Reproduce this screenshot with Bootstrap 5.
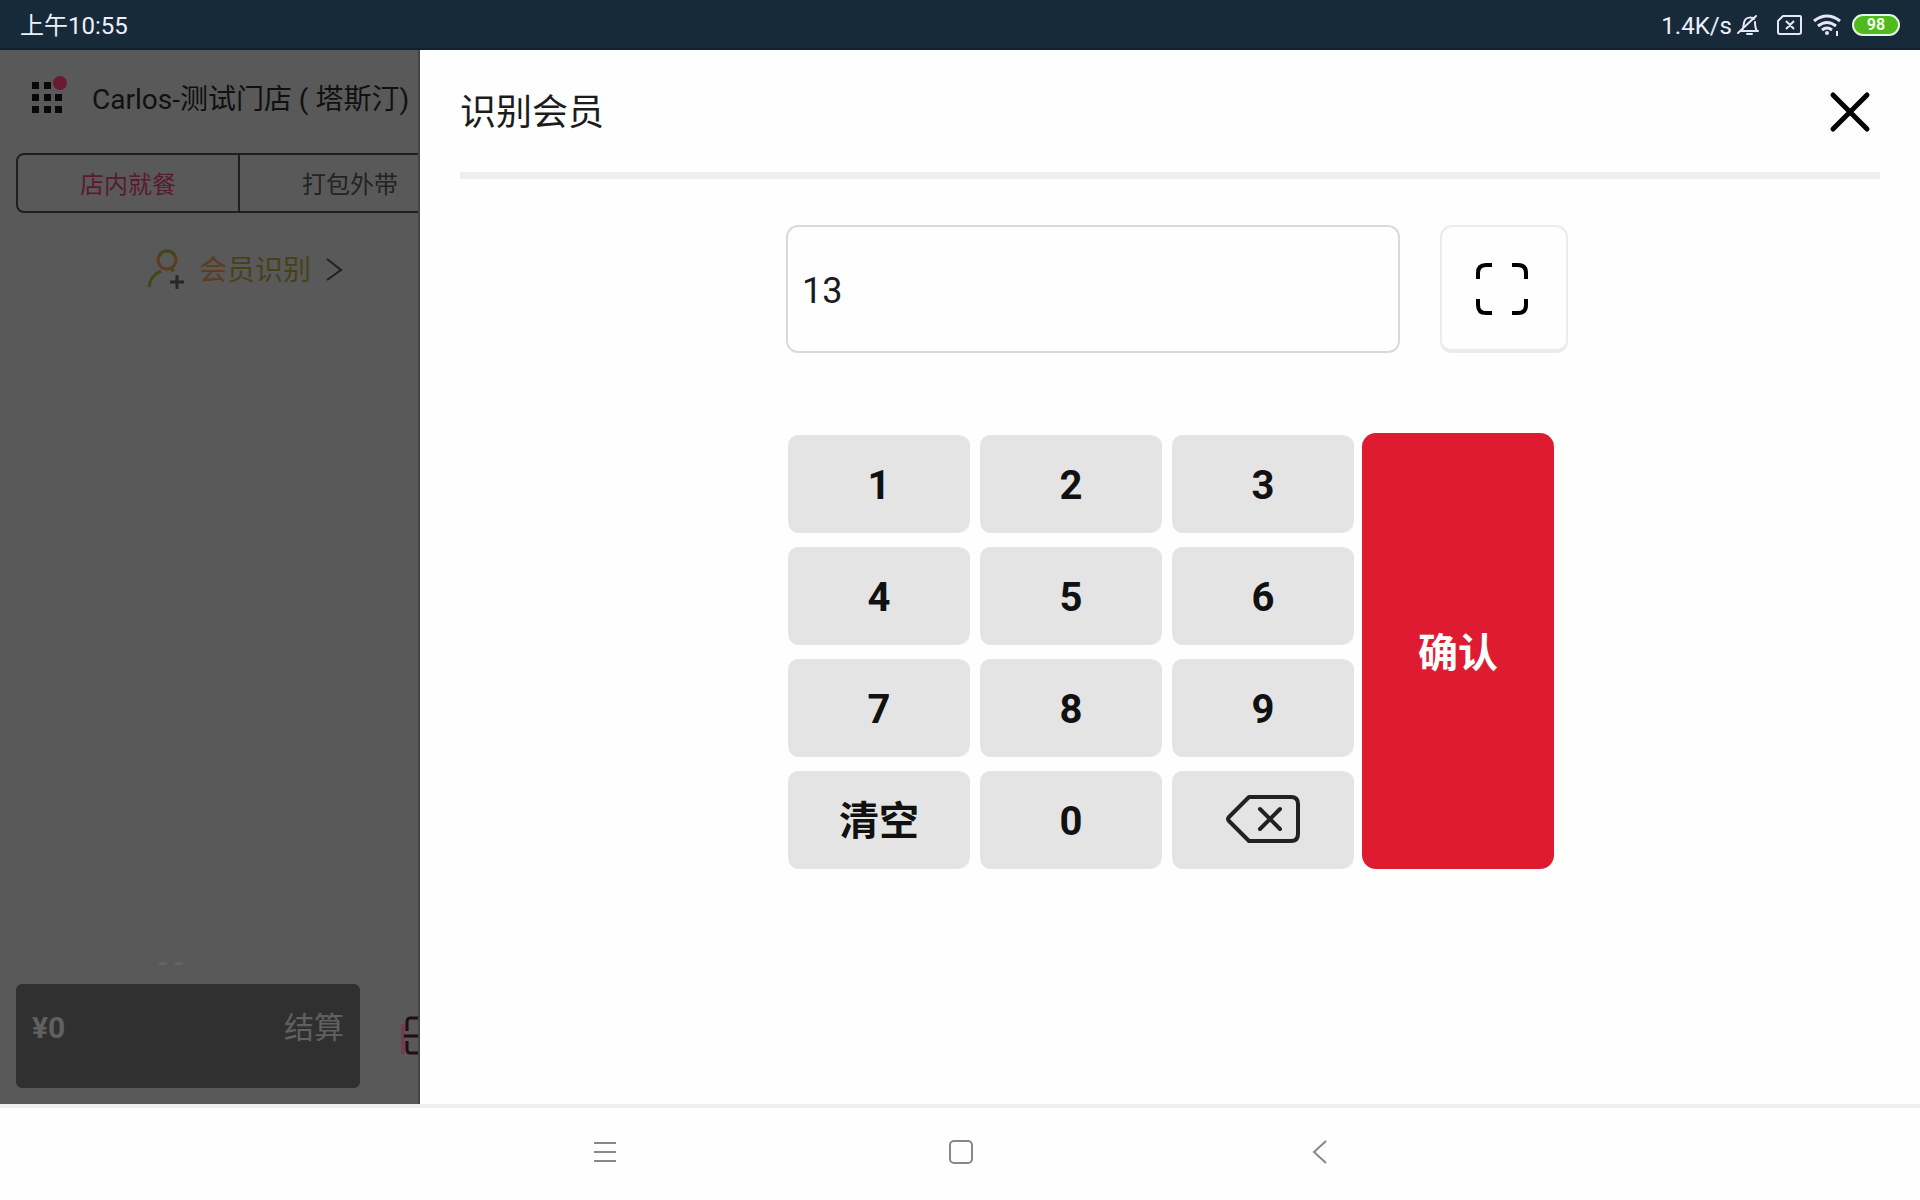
<!DOCTYPE html>
<html lang="zh-CN">
<head>
<meta charset="utf-8">
<meta name="viewport" content="width=device-width, initial-scale=1">
<title>识别会员</title>
<link href="https://cdn.jsdelivr.net/npm/bootstrap@5.3.0/dist/css/bootstrap.min.css" rel="stylesheet">
<style>
  body { font-family: Roboto, "Noto Sans CJK SC", sans-serif; background: #fefefe; color: #1c1c1c; }
  svg { display: block; flex: none; }
  .status-bar { height: 50px; padding: 2px 20px 0; background: #172a3a; color: #eef0fa; font-size: 24px; line-height: 24px; border-bottom: 2px solid #15202a; }
  .status-label { padding-top: 2px; }
  .battery { width: 48px; height: 22px; margin-left: 10px; border: 2px solid #e6f5e6; border-radius: 11px; background: #4dbb1c; color: #f2ffe8; font-size: 16px; line-height: 18px; font-weight: 700; text-align: center; }
  .order-side { width: 420px; flex: none; background: #595959; color: #111; border-right: 2px solid #444; }
  .store-head { padding: 24px 0 0 30px; gap: 22px; height: 103px; font-size: 28px; line-height: 52px; color: #101010; white-space: nowrap; }
  .tab-strip { margin-left: 16px; }
  .mode-tab { width: 222px; height: 60px; flex: none; font-size: 24px; padding: 4px 0 0; color: #232323; background: none; border: 2px solid #1f1f1f; }
  .mode-tab:first-child { border-radius: 8px 0 0 8px; width: 224px; color: #5a1a2e; }
  .mode-tab + .mode-tab { border-left: 0; border-radius: 0 8px 8px 0; }
  .member-link { margin-top: 32px; height: 48px; gap: 13px; margin-left: 146px; font-size: 28px; line-height: 48px; color: #45421a; text-decoration: none; }
  .member-link span { padding-top: 4px; }
  .member-link .warm { color: #5c3d20; }
  .side-foot { padding: 0 0 16px 16px; }
  .pay-btn { width: 344px; height: 104px; flex: none; background: #303030; color: #606060; border: 0; border-radius: 6px; padding: 20px 16px; font-size: 30px; line-height: 48px; }
  .member-panel { padding: 0 40px; min-width: 0; }
  .panel-head { height: 122px; padding-top: 2px; }
  .panel-title { font-size: 36px; line-height: 48px; font-weight: 400; margin: 0; padding-top: 2px; }
  .panel-rule { height: 7px; background: #eee; }
  .entry-area { width: 768px; margin: 46px auto 0; }
  .entry-row { gap: 40px; margin-bottom: 80px; }
  .phone-box { width: 614px; height: 128px; flex: none; border: 2px solid #dadada; border-radius: 12px; padding: 4px 14px 0; font-size: 36px; color: #1c1c1c; background: #fefefe; }
  .scan-btn { width: 128px; height: 128px; flex: none; border: 2px solid #ebebeb; border-bottom: 4px solid #ebebeb; border-radius: 12px; background: #fefefe; padding: 2px 4px 0 0; }
  .keypad { display: grid; grid-template-columns: repeat(3, 184px) 192px; grid-auto-rows: 100px; gap: 12px 8px; }
  .pad-key { background: #e4e4e4; background-clip: padding-box; border: 0 solid transparent; border-width: 2px 0 0 2px; border-radius: 12px; padding: 4px 0 0; font-size: 40px; font-weight: 700; line-height: 48px; color: #111; }
  .confirm-key { grid-column: 4; grid-row: 1 / span 4; background: #df1b32; color: #fff; border: 0; border-radius: 14px; padding-top: 6px; }
  .sys-nav { height: 96px; border-top: 4px solid #eee; padding-bottom: 4px; }
  .sys-btn { width: 358px; height: 88px; border: 0; background: none; padding: 0; }
</style>
<script src="https://cdn.jsdelivr.net/npm/bootstrap@5.3.0/dist/js/bootstrap.bundle.min.js"></script>
</head>
<body>
<div class="d-flex flex-column min-vh-100">
  <header class="status-bar d-flex align-items-center justify-content-between">
    <span class="status-label">上午10:55</span>
    <div class="d-flex align-items-center">
      <span class="status-label me-1">1.4K/s</span>
      <svg width="24" height="24" viewBox="0 0 24 24" fill="none" stroke="#e6e6f6" stroke-width="2" stroke-linecap="round" stroke-linejoin="round"><path d="M5 18h17M6 18c2-3 1-8 3-11 2-3 7-3 9-1M19 9c0 4 0 6 2 9M11 21h5M2 20 20 3"/></svg>
      <svg class="ms-3" width="28" height="24" viewBox="0 0 28 24" fill="none" stroke="#e6e6f6" stroke-width="2" stroke-linejoin="round"><path d="M7 3h17a1 1 0 0 1 1 1v15a2 2 0 0 1-2 2H4a2 2 0 0 1-2-2V8zM10 8l8 8M18 8l-8 8"/></svg>
      <svg class="ms-2" width="30" height="24" viewBox="0 0 30 24" fill="none" stroke="#e6e6f6" stroke-width="3"><path d="M2 8q13-10 26 0M6 13q9-7 18 0M10 17q5-4 10 0"/><circle cx="15" cy="20" r="2" fill="#e6e6f6" stroke="none"/><path d="M25 18v5" stroke-width="2"/></svg>
      <span class="battery">98</span>
    </div>
  </header>

  <div class="d-flex flex-grow-1">
    <aside class="order-side d-flex flex-column overflow-hidden">
      <div class="store-head d-flex">
        <svg width="40" height="48" viewBox="0 0 40 48"><g fill="#080808"><path d="M2 8h7v7H2zM14 8h7v7h-7zM2 20h7v7H2zM14 20h7v7h-7zM25 20h7v7h-7zM2 32h7v7H2zM14 32h7v7h-7zM25 32h7v7h-7z"/></g><circle cx="30" cy="9" r="7" fill="#6b1a31"/></svg>
        <span>Carlos-测试门店 ( 塔斯汀)</span>
      </div>
      <div class="tab-strip d-flex">
        <button type="button" class="mode-tab">店内就餐</button>
        <button type="button" class="mode-tab">打包外带</button>
      </div>
      <a href="#" class="member-link d-flex align-items-center">
        <svg width="40" height="44" viewBox="0 0 40 44" fill="none" stroke-width="3"><circle cx="21" cy="13" r="9" stroke="#5c3d20"/><path d="M13 9a9 9 0 0 1 16 0M3 40c1-9 5-13 12-16M28 22l-3 2" stroke="#43451a"/><path d="M24 35h14M31 28v14" stroke="#282828"/></svg>
        <span><span class="warm">会</span>员识别</span>
        <svg width="24" height="28" viewBox="0 0 24 28" fill="none" stroke="#202020" stroke-width="2"><path d="M3 4l14 11L3 25"/></svg>
      </a>
      <div class="mt-auto">
        <svg class="mx-auto" width="104" height="22" viewBox="0 0 104 22" fill="#636363"><path d="M2 0h8v3H2zM18 0h8v3h-8z"/></svg>
      </div>
      <div class="side-foot d-flex align-items-center">
        <button type="button" class="pay-btn d-flex justify-content-between align-items-start"><b>¥0</b><span>结算</span></button>
        <svg width="58" height="40" viewBox="0 0 58 40" fill="none" stroke="#210d14" stroke-width="3"><path d="M43 8v30" stroke="#713e4d" stroke-width="4"/><path d="M60 2H50q-3 0-3 4v9M44 20h16M47 25v8q0 4 3 4h10"/></svg>
      </div>
    </aside>

    <main class="member-panel flex-grow-1">
      <div class="panel-head d-flex align-items-center justify-content-between">
        <h1 class="panel-title">识别会员</h1>
        <button type="button" class="btn p-0 border-0 me-2" aria-label="关闭">
          <svg width="44" height="44" viewBox="0 0 44 44" fill="none" stroke="#000" stroke-width="5" stroke-linecap="round"><path d="M5 5l34 34M39 5L5 39"/></svg>
        </button>
      </div>
      <div class="panel-rule"></div>
      <form class="entry-area">
        <div class="entry-row d-flex">
          <input type="text" class="phone-box" value="13" aria-label="会员手机号">
          <button type="button" class="scan-btn d-flex align-items-center justify-content-center" aria-label="扫码">
            <svg width="52" height="52" viewBox="0 0 52 52" fill="none" stroke="#000" stroke-width="4"><path d="M2 16v-6q0-8 8-8h6M36 2h6q8 0 8 8v6M2 36v6q0 8 8 8h6M36 50h6q8 0 8-8v-6"/></svg>
          </button>
        </div>
        <div class="keypad">
          <button type="button" class="pad-key">1</button>
          <button type="button" class="pad-key">2</button>
          <button type="button" class="pad-key">3</button>
          <button type="button" class="pad-key">4</button>
          <button type="button" class="pad-key">5</button>
          <button type="button" class="pad-key">6</button>
          <button type="button" class="pad-key">7</button>
          <button type="button" class="pad-key">8</button>
          <button type="button" class="pad-key">9</button>
          <button type="button" class="pad-key">清空</button>
          <button type="button" class="pad-key">0</button>
          <button type="button" class="pad-key p-0 d-flex align-items-center justify-content-center" aria-label="退格">
            <svg width="74" height="50" viewBox="0 0 74 50" fill="none" stroke="#222" stroke-width="4" stroke-linecap="round" stroke-linejoin="round"><path d="M23 2h42q7 0 7 7v30q0 7-7 7H23L3 26q-2-2 0-4zM34 14l20 20M54 14L34 34"/></svg>
          </button>
          <button type="submit" class="pad-key confirm-key">确认</button>
        </div>
      </form>
    </main>
  </div>

  <nav class="sys-nav d-flex justify-content-center align-items-center">
    <button type="button" class="sys-btn d-flex justify-content-center align-items-center" aria-label="菜单"><svg width="28" height="28" viewBox="0 0 28 28" stroke="#888" stroke-width="2"><path d="M6 5h22M6 14h22M6 23h22"/></svg></button>
    <button type="button" class="sys-btn d-flex justify-content-center align-items-center" aria-label="主页"><svg width="28" height="28" viewBox="0 0 28 28" fill="none" stroke="#888" stroke-width="2"><rect x="4" y="3" width="22" height="22" rx="4"/></svg></button>
    <button type="button" class="sys-btn d-flex justify-content-center align-items-center" aria-label="返回"><svg width="28" height="28" viewBox="0 0 28 28" fill="none" stroke="#888" stroke-width="2"><path d="M22 3L10 14l12 11"/></svg></button>
  </nav>
</div>
</body>
</html>
